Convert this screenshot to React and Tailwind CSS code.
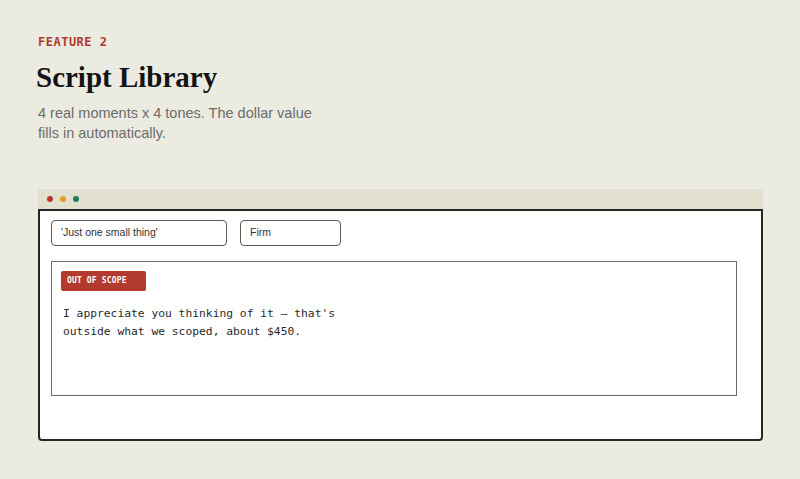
import React from "react";

const mono = { fontFamily: '"DejaVu Sans Mono", "Liberation Mono", monospace' };

const Field = ({ label, width }) => (
  <div
    className={`h-[26px] ${width} flex items-center pl-[9px] rounded-[4px] border border-[#5a5a5a] bg-white text-[10.5px] text-[#333] font-['Liberation_Sans',Arial,sans-serif]`}
  >
    {label}
  </div>
);

const ScriptCard = () => (
  <div className="mt-[15px] w-[686px] h-[135px] border border-[#6a6a6a] pt-[9px] pl-[9px]">
    <div
      className="w-[85px] h-[20px] flex items-center pl-[6px] rounded-[2px] bg-[#b33a2e] text-white text-[8px] font-bold tracking-[0.15px]"
      style={mono}
    >
      OUT OF SCOPE
    </div>
    <p
      className="mt-[14px] ml-[2px] w-[300px] text-[11.3px] leading-[18px] text-[#2b2b2b]"
      style={mono}
    >
      I appreciate you thinking of it — that's outside what we scoped, about $450.
    </p>
  </div>
);

export default function App() {
  return (
    <div className="w-full h-[479px] bg-[#ecebe1] pt-[34px] px-[38px]">
      <div
        className="text-[12px] leading-[16px] font-bold tracking-[0.5px] text-[#b03a2e]"
        style={mono}
      >
        FEATURE 2
      </div>
      <h1 className="mt-[13px] -ml-[2px] text-[29px] leading-[29px] font-bold text-[#141414] font-['Liberation_Serif','Times_New_Roman',serif]">
        Script Library
      </h1>
      <p className="mt-[12px] max-w-[285px] text-[14.5px] leading-[19.5px] text-[#6b6b68] font-['Liberation_Sans',Arial,sans-serif]">
        4 real moments x 4 tones. The dollar value fills in automatically.
      </p>

      {/* browser window */}
      <div className="mt-[46px] w-[725px]">
        <div className="h-[20px] bg-[#e2e0cf] flex items-center gap-[7px] pl-[9px]">
          <span className="w-[6px] h-[6px] rounded-full bg-[#b8352a]" />
          <span className="w-[6px] h-[6px] rounded-full bg-[#e39a26]" />
          <span className="w-[6px] h-[6px] rounded-full bg-[#1f7a59]" />
        </div>
        <div className="h-[232px] bg-white border-2 border-[#262626] rounded-b-[4px] pt-[9px] pl-[11px]">
          <div className="flex gap-[13px]">
            <Field label="'Just one small thing'" width="w-[176px]" />
            <Field label="Firm" width="w-[101px]" />
          </div>
          <ScriptCard />
        </div>
      </div>
    </div>
  );
}
